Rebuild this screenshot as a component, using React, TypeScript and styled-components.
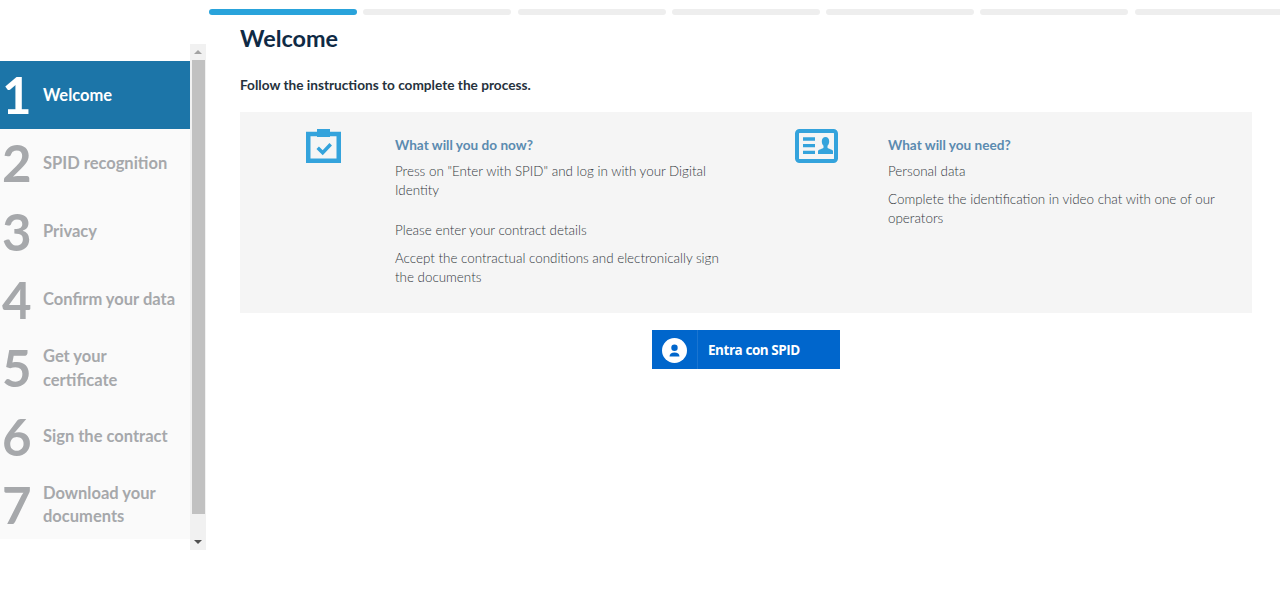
import React from "react";
import styled, { createGlobalStyle } from "styled-components";

const Global = createGlobalStyle`
  html, body { margin: 0; padding: 0; background: #fff; }
  body { font-family: Lato, "Liberation Sans", sans-serif; overflow: hidden; }
`;

const Page = styled.div`
  width: 1280px;
  height: 599px;
  padding-top: 9px;
  box-sizing: border-box;
  overflow: hidden;
`;

const Progress = styled.div`
  display: grid;
  grid-template-columns: repeat(7, 148px);
  column-gap: 6.3px;
  margin-left: 209px;
  height: 6px;
`;

const Segment = styled.div<{ $active?: boolean }>`
  height: 6px;
  border-radius: 3px;
  background: ${(p) => (p.$active ? "#29a3db" : "#eeeeee")};
`;

const Body = styled.div`
  display: flex;
  align-items: flex-start;
`;

const SideWrap = styled.div`
  display: flex;
  width: 206px;
  height: 506px;
  margin-top: 29px;
  flex: none;
`;

const SideList = styled.ol`
  list-style: none;
  margin: 17px 0 0;
  padding: 0;
  width: 190px;
  height: 478px;
  background: #fafafa;
  display: grid;
  grid-auto-rows: 1fr;
`;

const Step = styled.li<{ $active?: boolean }>`
  display: flex;
  align-items: center;
  background: ${(p) => (p.$active ? "#1c75a8" : "transparent")};
  color: ${(p) => (p.$active ? "#fff" : "#a6a8ab")};
`;

const StepNumber = styled.span`
  flex: none;
  width: 43px;
  padding: 0 0 1px 2px;
  box-sizing: border-box;
  font-size: 51px;
  font-weight: 700;
  line-height: 1;
`;

const StepLabel = styled.span`
  max-width: 140px;
  padding-top: 0.5px;
  font-size: 16.5px;
  font-weight: 700;
  line-height: 23.5px;
`;

const Track = styled.div`
  width: 16px;
  height: 506px;
  background: #f1f1f1;
  display: flex;
  flex-direction: column;
  align-items: center;
`;

const ArrowBox = styled.div`
  height: 16px;
  width: 100%;
  flex: none;
  display: flex;
  align-items: center;
  justify-content: center;
`;

const ArrowUp = styled.span`
  width: 0;
  height: 0;
  border-left: 4px solid transparent;
  border-right: 4px solid transparent;
  border-bottom: 4px solid #a3a3a3;
`;

const ArrowDown = styled.span`
  width: 0;
  height: 0;
  border-left: 4px solid transparent;
  border-right: 4px solid transparent;
  border-top: 4px solid #505050;
`;

const Thumb = styled.div`
  flex: none;
  width: 13px;
  height: 454px;
  margin-left: 1px;
  background: #c1c1c1;
`;

const TrackGap = styled.div`
  flex: 1;
`;

const Main = styled.main`
  width: 1012px;
  margin-left: 34px;
`;

const Title = styled.h1`
  margin: 8px 0 0;
  font-size: 23.4px;
  line-height: 30px;
  font-weight: 700;
  color: #0f2a45;
`;

const Lead = styled.p`
  margin: 22px 0 0;
  font-size: 13.65px;
  line-height: 20px;
  font-weight: 700;
  color: #26323d;
`;

const InfoBox = styled.section`
  margin-top: 17px;
  height: 201px;
  box-sizing: border-box;
  background: #f5f5f5;
  padding: 17px 0 0 13px;
  display: grid;
  grid-template-columns: 493px 506px;
`;

const InfoColumn = styled.div`
  display: grid;
  grid-template-columns: 142px 1fr;
  align-content: start;
`;

const IconCell = styled.div`
  width: 141px;
  display: flex;
  justify-content: center;
`;

const InfoText = styled.div`
  width: 335px;
  padding-top: 6px;
`;

const InfoHeading = styled.h2`
  margin: 0 0 7px;
  font-size: 13.6px;
  line-height: 20px;
  font-weight: 700;
  color: #5b8bb0;
`;

const InfoLine = styled.p<{ $gap?: number }>`
  margin: 0 0 ${(p) => p.$gap ?? 9}px;
  font-size: 13.4px;
  line-height: 19px;
  font-weight: 300;
  color: #34393e;
`;

const ButtonRow = styled.div`
  display: flex;
  justify-content: center;
  margin-top: 17px;
`;

const SpidButton = styled.button`
  width: 188px;
  height: 39px;
  border: 0;
  padding: 0;
  background: #0066cc;
  color: #fff;
  display: flex;
  align-items: stretch;
  font-family: "Open Sans", sans-serif;
  font-size: 13.5px;
  font-weight: 700;
  letter-spacing: -0.45px;
`;

const SpidIcon = styled.span`
  width: 46px;
  border-right: 1px solid #1a75d1;
  display: flex;
  align-items: center;
  justify-content: center;
  padding-top: 1px;
  box-sizing: border-box;
  flex: none;
`;

const SpidLabel = styled.span`
  padding: 1px 0 0 10px;
  line-height: 39px;
`;

const steps = [
  "Welcome",
  "SPID recognition",
  "Privacy",
  "Confirm your data",
  "Get your certificate",
  "Sign the contract",
  "Download your documents",
];

const ClipboardIcon = () => (
  <svg width="35" height="34" viewBox="0 0 35 34" fill="none">
    <rect x="2.250" y="5" width="30.500" height="26.750" stroke="#34a3dc" strokeWidth="4.500" />
    <rect x="11" y="0" width="13" height="8" fill="#34a3dc" />
    <path d="M11.700 18.700l5 5 8-8.400" stroke="#34a3dc" strokeWidth="3.500" />
  </svg>
);

const CardIcon = () => (
  <svg width="43" height="34" viewBox="0 0 43 34" fill="none">
    <rect x="2" y="2" width="39" height="30" rx="2.500" stroke="#34a3dc" strokeWidth="4" />
    <path d="M8 10h12M8 16.600h12M8 23.300h12" stroke="#34a3dc" strokeWidth="3.300" />
    <path
      d="M30.500 8c2.300 0 3.700 1.800 3.700 4.300 0 2-.8 3.500-1.700 4.500v1.700c0 1.200 3.300 1.400 5.500 3.200V25H23v-3.300c2.200-1.800 5.500-2 5.500-3.200v-1.700c-.9-1-1.700-2.500-1.700-4.500C26.800 9.800 28.200 8 30.500 8z"
      fill="#34a3dc"
    />
  </svg>
);

const UserIcon = () => (
  <svg width="25" height="25" viewBox="0 0 25 25">
    <circle cx="12.500" cy="12.500" r="12.500" fill="#fff" />
    <circle cx="12.500" cy="9.700" r="3.200" fill="#0066cc" />
    <path d="M7.500 18.500c0-2.800 2-4 5-4s5 1.200 5 4z" fill="#0066cc" />
  </svg>
);

export default function App() {
  return (
    <Page>
      <Global />
      <Progress>
        {steps.map((s, i) => (
          <Segment key={s} $active={i === 0} />
        ))}
      </Progress>
      <Body>
        <SideWrap>
          <SideList>
            {steps.map((s, i) => (
              <Step key={s} $active={i === 0}>
                <StepNumber>{i + 1}</StepNumber>
                <StepLabel>{s}</StepLabel>
              </Step>
            ))}
          </SideList>
          <Track>
            <ArrowBox>
              <ArrowUp />
            </ArrowBox>
            <Thumb />
            <TrackGap />
            <ArrowBox>
              <ArrowDown />
            </ArrowBox>
          </Track>
        </SideWrap>
        <Main>
          <Title>Welcome</Title>
          <Lead>Follow the instructions to complete the process.</Lead>
          <InfoBox>
            <InfoColumn>
              <IconCell>
                <ClipboardIcon />
              </IconCell>
              <InfoText>
                <InfoHeading>What will you do now?</InfoHeading>
                <InfoLine $gap={21}>
                  Press on "Enter with SPID" and log in with your Digital Identity
                </InfoLine>
                <InfoLine>Please enter your contract details</InfoLine>
                <InfoLine>
                  Accept the contractual conditions and electronically sign the documents
                </InfoLine>
              </InfoText>
            </InfoColumn>
            <InfoColumn>
              <IconCell>
                <CardIcon />
              </IconCell>
              <InfoText>
                <InfoHeading>What will you need?</InfoHeading>
                <InfoLine>Personal data</InfoLine>
                <InfoLine>
                  Complete the identification in video chat with one of our operators
                </InfoLine>
              </InfoText>
            </InfoColumn>
          </InfoBox>
          <ButtonRow>
            <SpidButton type="button">
              <SpidIcon>
                <UserIcon />
              </SpidIcon>
              <SpidLabel>Entra con SPID</SpidLabel>
            </SpidButton>
          </ButtonRow>
        </Main>
      </Body>
    </Page>
  );
}
